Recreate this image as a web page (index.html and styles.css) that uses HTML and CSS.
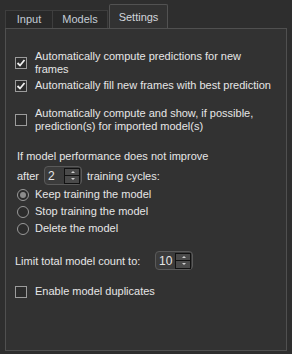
FILE: index.html
```html
<!DOCTYPE html>
<html lang="en">
<head>
    <meta charset="UTF-8">
    <title>Settings</title>
    <link rel="stylesheet" href="styles.css">
</head>
<body>
    <div class="tab-bar">
        <div class="tab tab-input">Input</div>
        <div class="tab tab-models">Models</div>
        <div class="tab tab-settings active">Settings</div>
    </div>

    <div class="panel">
        <label class="check-row">
            <span class="box checked">
                <svg viewBox="0 0 12 12" width="12" height="12"><polyline points="2.5,6 5,8.5 9.5,3" /></svg>
            </span>
            <span class="text">Automatically compute predictions for new<br>frames</span>
        </label>

        <label class="check-row row-tight">
            <span class="box checked">
                <svg viewBox="0 0 12 12" width="12" height="12"><polyline points="2.5,6 5,8.5 9.5,3" /></svg>
            </span>
            <span class="text">Automatically fill new frames with best prediction</span>
        </label>

        <label class="check-row row-gap">
            <span class="box"></span>
            <span class="text">Automatically compute and show, if possible,<br>prediction(s) for imported model(s)</span>
        </label>

        <div class="plain perf-line">If model performance does not improve</div>

        <div class="spin-line">
            <span>after</span>
            <div class="spinbox">
                <span class="spin-value">2</span>
                <div class="spin-buttons">
                    <span class="spin-btn up"></span>
                    <span class="spin-btn down"></span>
                </div>
            </div>
            <span>training cycles:</span>
        </div>

        <div class="radio-group">
            <label class="radio-row"><span class="radio selected"></span>Keep training the model</label>
            <label class="radio-row"><span class="radio"></span>Stop training the model</label>
            <label class="radio-row"><span class="radio"></span>Delete the model</label>
        </div>

        <div class="spin-line limit-line">
            <span class="limit-label">Limit total model count to:</span>
            <div class="spinbox">
                <span class="spin-value">10</span>
                <div class="spin-buttons">
                    <span class="spin-btn up"></span>
                    <span class="spin-btn down"></span>
                </div>
            </div>
        </div>

        <label class="check-row dup-row">
            <span class="box"></span>
            <span class="text">Enable model duplicates</span>
        </label>
    </div>
</body>
</html>
```

FILE: styles.css
```css
body {
    margin: 0;
    width: 292px;
    height: 354px;
    background: #2e2e2e;
    font-family: 'Liberation Sans', Arial, sans-serif;
    font-size: 11px;
    color: #e6e6e6;
    overflow: hidden;
}

.tab-bar {
    display: flex;
    align-items: flex-end;
    height: 24px;
    padding: 4px 0 0 5px;
}

.tab {
    height: 17px;
    line-height: 16px;
    text-align: center;
    background: #292929;
    border: 1px solid #3e3e3e;
    border-bottom: none;
    color: #c4ccd6;
}

.tab + .tab {
    border-left: none;
}

.tab-input {
    width: 46px;
}

.tab-models {
    width: 54px;
}

.tab-settings {
    width: 57px;
}

.tab.active {
    height: 23px;
    line-height: 25px;
    background: #323232;
    border: 1px solid #525252;
    border-bottom: none;
    border-radius: 2px 2px 0 0;
    margin-left: 1px;
    color: #d2d6dc;
}

.panel {
    margin: 0 5px 5px 5px;
    height: 300px;
    padding: 21px 9px 0 9px;
    background: #323232;
    border: 1px solid #505050;
}

.check-row {
    display: flex;
    align-items: center;
    line-height: 13px;
}

.row-tight {
    margin-top: 3px;
}

.row-gap {
    margin-top: 15px;
}

.box {
    flex: none;
    width: 10px;
    height: 10px;
    border: 1px solid #9c9c9c;
    background: #2c2c2c;
    margin-right: 8px;
    position: relative;
}

.box svg {
    position: absolute;
    left: -1px;
    top: -1px;
}

.box svg polyline {
    fill: none;
    stroke: #f0f0f0;
    stroke-width: 1.8;
}

.text {
    white-space: nowrap;
}

.plain {
    line-height: 13px;
    padding-left: 2px;
}

.perf-line {
    margin-top: 17px;
}

.spin-line {
    display: flex;
    align-items: center;
    gap: 5px;
    margin-top: 3px;
    padding-left: 2px;
}

.spinbox {
    display: flex;
    align-items: center;
    justify-content: space-between;
    width: 32px;
    height: 17px;
    padding: 0 1px 0 3px;
    border: 1px solid #5a5a5a;
    border-radius: 4px;
    background: #3b3b3b;
}

.spin-value {
    font-size: 12px;
    color: #e6e6e6;
}

.spin-buttons {
    display: flex;
    flex-direction: column;
    width: 16px;
}

.spin-btn {
    height: 6px;
    border: 1px solid #111;
    background: #4a4a4a;
    position: relative;
}

.spin-btn + .spin-btn {
    border-top: none;
    height: 7px;
}

.spin-btn::after {
    content: '';
    position: absolute;
    left: 6px;
    top: 2px;
    border-left: 2px solid transparent;
    border-right: 2px solid transparent;
}

.spin-btn.up::after {
    border-bottom: 2px solid #cfcfcf;
}

.spin-btn.down::after {
    border-top: 2px solid #cfcfcf;
}

.radio-group {
    display: flex;
    flex-direction: column;
    gap: 4px;
    margin-top: 3px;
}

.radio-row {
    display: flex;
    align-items: center;
    line-height: 13px;
}

.radio {
    flex: none;
    width: 10px;
    height: 10px;
    border: 1px solid #9a9a9a;
    border-radius: 50%;
    background: #2c2c2c;
    margin: 0 6px 0 2px;
    position: relative;
}

.radio.selected::after {
    content: '';
    position: absolute;
    left: 2px;
    top: 2px;
    width: 6px;
    height: 6px;
    border-radius: 50%;
    background: #8c8c8c;
}

.limit-line {
    margin-top: 16px;
    padding-left: 0;
    gap: 0;
}

.limit-label {
    width: 140px;
}

.dup-row {
    margin-top: 15px;
}
```
